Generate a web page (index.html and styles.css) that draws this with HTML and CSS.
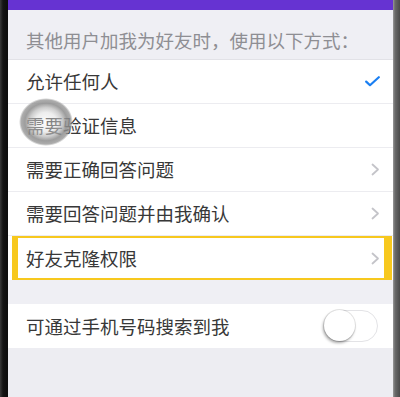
FILE: index.html
```html
<!DOCTYPE html>
<html lang="zh">
<head>
<meta charset="utf-8">
<link rel="stylesheet" href="styles.css">
</head>
<body>
<div class="frame">
  <div class="bar-left"></div>
  <div class="screen">
    <div class="topbar"></div>
    <div class="header">其他用户加我为好友时，使用以下方式：</div>
    <div class="list">
      <div class="row">
        <span class="label">允许任何人</span>
        <svg class="check" width="15" height="11" viewBox="0 0 15 11"><path d="M1.2 5.6 L5 9.2 L13.8 1.2" fill="none" stroke="#1a7ff2" stroke-width="2.2" stroke-linecap="round" stroke-linejoin="round"/></svg>
      </div>
      <div class="row">
        <span class="label">需要验证信息</span>
      </div>
      <div class="row">
        <span class="label">需要正确回答问题</span>
        <svg class="chev" width="9" height="13" viewBox="0 0 9 13"><path d="M1.5 1.5 L7 6.5 L1.5 11.5" fill="none" stroke="#c4c4c9" stroke-width="1.8" stroke-linecap="round" stroke-linejoin="round"/></svg>
      </div>
      <div class="row">
        <span class="label">需要回答问题并由我确认</span>
        <svg class="chev" width="9" height="13" viewBox="0 0 9 13"><path d="M1.5 1.5 L7 6.5 L1.5 11.5" fill="none" stroke="#c4c4c9" stroke-width="1.8" stroke-linecap="round" stroke-linejoin="round"/></svg>
      </div>
      <div class="row row-highlight">
        <span class="label">好友克隆权限</span>
        <svg class="chev" width="9" height="13" viewBox="0 0 9 13"><path d="M1.5 1.5 L7 6.5 L1.5 11.5" fill="none" stroke="#c4c4c9" stroke-width="1.8" stroke-linecap="round" stroke-linejoin="round"/></svg>
      </div>
    </div>
    <div class="gap"></div>
    <div class="list">
      <div class="row row-single">
        <span class="label">可通过手机号码搜索到我</span>
        <div class="toggle"><div class="knob"></div></div>
      </div>
    </div>
    <div class="rest"></div>
    <div class="touch"></div>
  </div>
  <div class="bar-right"></div>
</div>
</body>
</html>
```

FILE: styles.css
```css
html, body {
  margin: 0;
  padding: 0;
  width: 400px;
  height: 397px;
  overflow: hidden;
  background: #efeff4;
  font-family: "Noto Sans CJK SC", "Noto Sans", sans-serif;
}

.frame {
  display: flex;
  width: 400px;
  height: 397px;
}

.bar-left {
  width: 8px;
  flex: none;
  background: linear-gradient(to right, #3a3a3a 0, #141414 3px, #0c0c0c 100%);
}

.bar-right {
  width: 7px;
  flex: none;
  background: linear-gradient(to right, #9a9a9a 0, #6a6a6a 2px, #4a4a4a 100%);
}

.screen {
  position: relative;
  flex: 1;
  display: flex;
  flex-direction: column;
  background: #efeff4;
}

.topbar {
  height: 10px;
  flex: none;
  background: #6633d2;
}

.header {
  height: 50px;
  box-sizing: border-box;
  padding: 20px 0 0 18px;
  line-height: 20px;
  font-size: 18.5px;
  color: #8e8e93;
  border-bottom: 1px solid #e2e2e7;
  white-space: nowrap;
}

.list {
  background: #ffffff;
}

.row {
  position: relative;
  height: 44px;
  box-sizing: border-box;
  display: flex;
  align-items: center;
  justify-content: space-between;
  padding: 0 13px 1px 18px;
  border-bottom: 1px solid #ececf0;
}

.row:last-child {
  border-bottom: none;
  padding-bottom: 0;
}

.label {
  font-size: 18.5px;
  line-height: 20px;
  color: #383838;
  white-space: nowrap;
}

.row-highlight::after {
  content: "";
  position: absolute;
  left: 4px;
  right: 1px;
  top: 0;
  bottom: 0;
  border-style: solid;
  border-color: #f7c81e;
  border-width: 2px 8px 2px 6px;
  pointer-events: none;
}

.gap {
  height: 24px;
  flex: none;
}

.row-single {
  padding-right: 15px;
}

.toggle {
  position: relative;
  width: 54px;
  height: 32px;
  box-sizing: border-box;
  border: 1.5px solid #e3e3e6;
  border-radius: 16px;
  background: #ffffff;
}

.knob {
  position: absolute;
  left: -1px;
  top: -1px;
  width: 31px;
  height: 31px;
  border-radius: 50%;
  background: #ffffff;
  box-shadow: -1px 2px 3px rgba(0, 0, 0, 0.35), 0 0 0 1px rgba(0, 0, 0, 0.1);
}

.rest {
  flex: 1;
  background: #ededf2;
}

.touch {
  position: absolute;
  left: 11px;
  top: 98px;
  width: 54px;
  height: 48px;
  border-radius: 50%;
  background: radial-gradient(closest-side, rgba(245,245,245,0.35) 0, rgba(220,220,220,0.5) 40%, rgba(185,185,185,0.7) 60%, rgba(140,140,140,0.85) 78%, rgba(145,145,145,0.75) 92%, rgba(200,200,200,0) 100%);
  pointer-events: none;
}
```
